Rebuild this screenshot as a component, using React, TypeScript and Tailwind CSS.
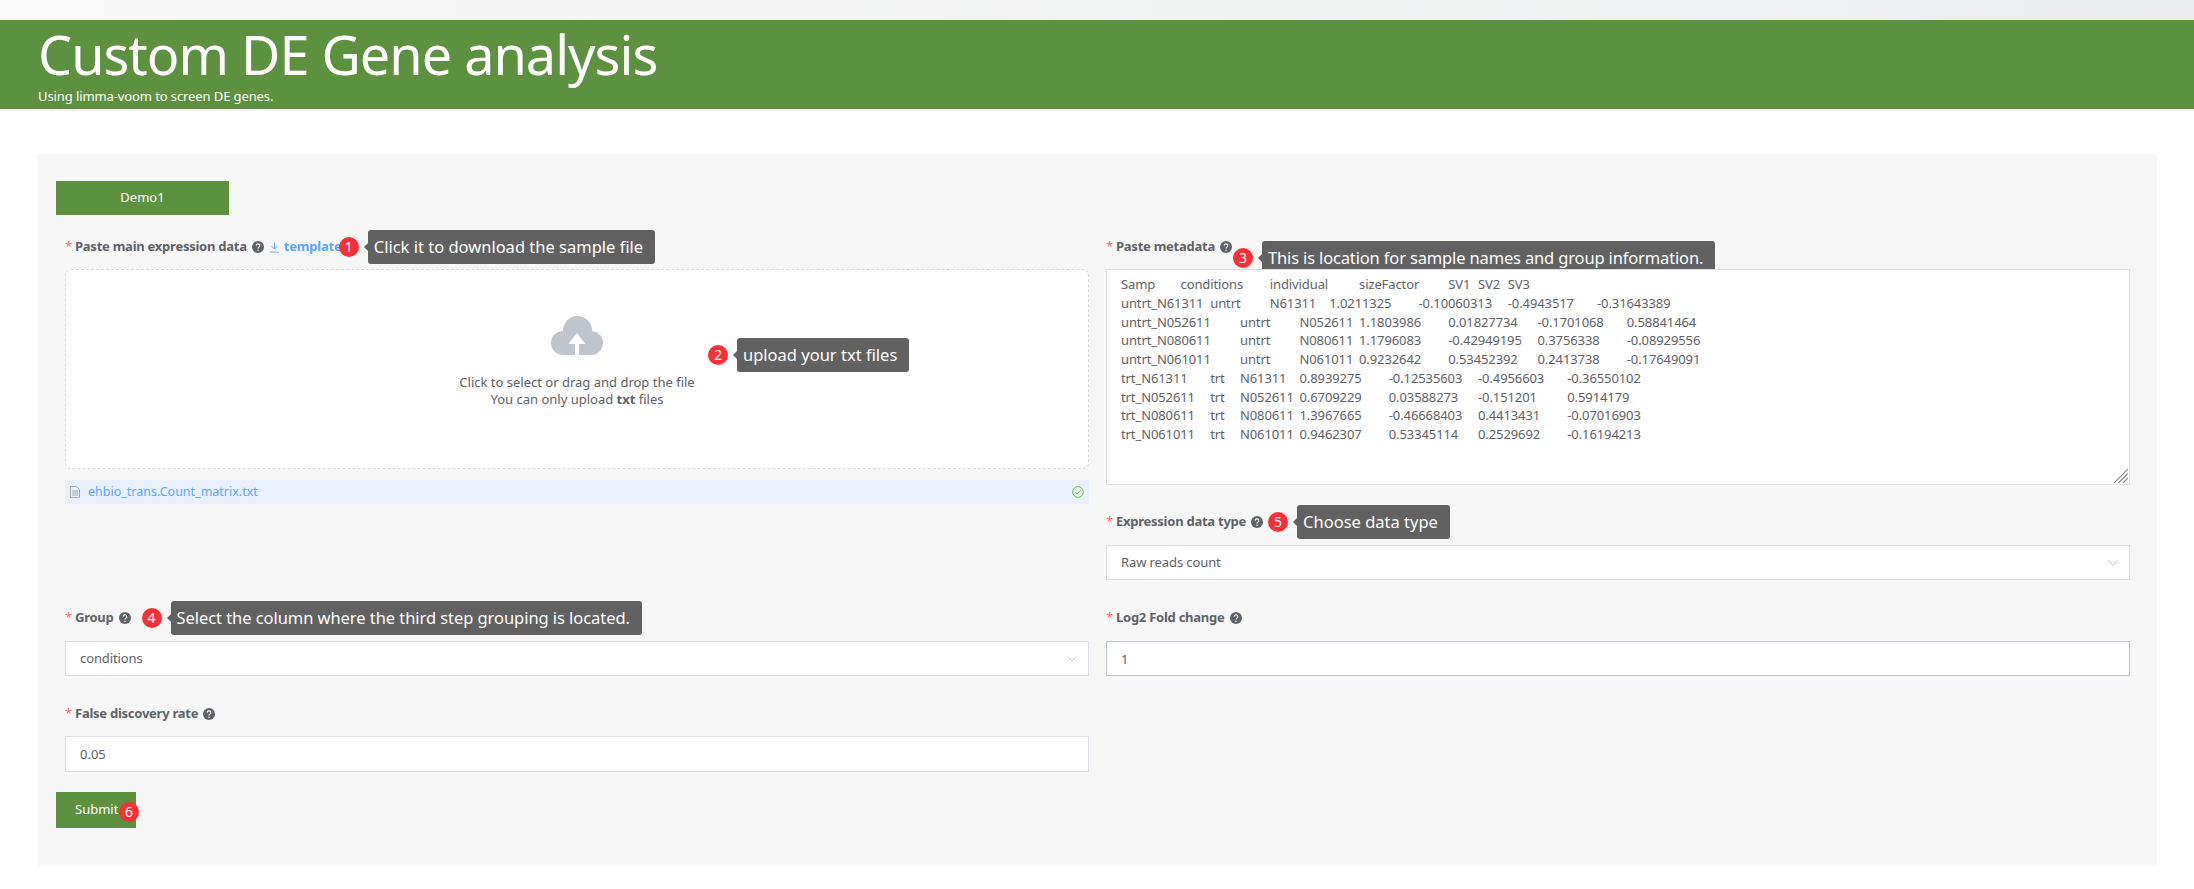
import React from "react";

const GREEN = "bg-[#5b913f]";
const meta = [
  "Samp\tconditions\tindividual\tsizeFactor\tSV1\tSV2\tSV3",
  "untrt_N61311\tuntrt\tN61311\t1.0211325\t-0.10060313\t-0.4943517\t-0.31643389",
  "untrt_N052611\tuntrt\tN052611\t1.1803986\t0.01827734\t-0.1701068\t0.58841464",
  "untrt_N080611\tuntrt\tN080611\t1.1796083\t-0.42949195\t0.3756338\t-0.08929556",
  "untrt_N061011\tuntrt\tN061011\t0.9232642\t0.53452392\t0.2413738\t-0.17649091",
  "trt_N61311\ttrt\tN61311\t0.8939275\t-0.12535603\t-0.4956603\t-0.36550102",
  "trt_N052611\ttrt\tN052611\t0.6709229\t0.03588273\t-0.151201\t0.5914179",
  "trt_N080611\ttrt\tN080611\t1.3967665\t-0.46668403\t0.4413431\t-0.07016903",
  "trt_N061011\ttrt\tN061011\t0.9462307\t0.53345114\t0.2529692\t-0.16194213",
].join("\n");

function Help() {
  return (
    <svg viewBox="0 0 12 12" className="w-3 h-3 shrink-0">
      <circle cx="6" cy="6" r="6" fill="#5f6266" />
      <path d="M4.2 4.7a1.8 1.8 0 1 1 2.7 1.5c-.6.4-.9.6-.9 1.3" fill="none" stroke="#fff" strokeWidth="1.1" />
      <circle cx="6" cy="9.2" r=".75" fill="#fff" />
    </svg>
  );
}

function Badge({ n, className = "" }: { n: number; className?: string }) {
  return (
    <span className={`w-5 h-5 rounded-full bg-[#fb2f36] text-white text-[14px] leading-5 text-center shrink-0 ${className}`}>{n}</span>
  );
}

function Tip({ text, className = "" }: { text: string; className?: string }) {
  return (
    <span className={`relative h-[34px] leading-[34px] pl-[6px] pr-[12px] rounded-[3px] bg-[#616161] text-white text-[16.5px] whitespace-nowrap shrink-0 ${className}`}>
      <span className="absolute left-[-4px] top-[13px] w-0 h-0 border-y-[4px] border-y-transparent border-r-[4px] border-r-[#616161]" />
      {text}
    </span>
  );
}

function Label({ text, children, className = "" }: { text: string; children?: React.ReactNode; className?: string }) {
  return (
    <div className={`flex items-center h-[34px] text-[13px] ${className}`}>
      <span className="text-[#f56c6c] w-[10px] shrink-0">*</span>
      <span className="font-bold text-[#5f6266] whitespace-nowrap mr-[5px] tracking-[-0.25px]">{text}</span>
      <Help />
      {children}
    </div>
  );
}

function Chevron() {
  return (
    <svg viewBox="0 0 10 6" className="w-[10px] h-[6px] shrink-0">
      <path d="M.5.5 5 5.300 9.500.5" fill="none" stroke="#c0c4cc" strokeWidth="1" />
    </svg>
  );
}

function SelectBox({ value }: { value: string }) {
  return (
    <div className="flex items-center justify-between h-[35px] pl-[14px] pr-[11px] bg-white border border-[#dcdfe6] text-[13px] tracking-[-0.1px] text-[#606266]">
      <span>{value}</span>
      <Chevron />
    </div>
  );
}

export default function App() {
  return (
    <div className="min-h-[889px] bg-white font-['Noto_Sans','Noto_Sans_CJK_SC',sans-serif] text-[#606266]">
      <div className="h-5 bg-gradient-to-r from-[#f8f8f8] to-[#ecedee]" />
      <header className={`${GREEN} h-[89px] pl-[38px] text-white`}>
        <h1 className="text-[54px] tracking-[-1px] leading-[64px] pt-[2px] whitespace-nowrap">Custom DE Gene analysis</h1>
        <p className="text-[13px] tracking-[-0.1px] leading-[20px]">Using limma-voom to screen DE genes.</p>
      </header>

      <main className="mt-[45px] ml-[38px] mr-[37px] bg-[#f7f7f7] pt-[27px] pb-[38px] pl-[18px] pr-[27px]">
        <button className={`${GREEN} w-[173px] h-[34px] text-white text-[13px] block`}>Demo1</button>

        <div className="pl-[9px] mt-[15px] grid grid-cols-2 gap-x-[17px]">
          <div>
            <Label text="Paste main expression data" className="mb-[5px]">
              <svg viewBox="0 0 12 12" className="w-[11px] h-[11px] ml-[5px] shrink-0">
                <path d="M6 .5v7M2.800 4.600 6 7.800l3.200-3.200M1 11h10" fill="none" stroke="#53a8ff" strokeWidth="1" />
              </svg>
              <span className="ml-[4px] w-[55px] font-bold text-[#53a8ff] tracking-[-0.2px]">template</span>
              <Badge n={1} className="relative" />
              <Tip text="Click it to download the sample file" className="ml-[9px]" />
            </Label>
            <div className="relative h-[200px] bg-white rounded-[6px] border border-dashed border-[#d9d9d9] flex flex-col items-center pt-[46px]">
              <svg viewBox="0 0 52 39" className="w-[52px] h-[39px]">
                <circle cx="26.500" cy="14.500" r="14.500" fill="#c0c4cc" />
                <circle cx="12" cy="27" r="12" fill="#c0c4cc" />
                <circle cx="40" cy="27" r="12" fill="#c0c4cc" />
                <rect x="12" y="20" width="28" height="19" fill="#c0c4cc" />
                <path d="M26 17 34.500 28H28V39H24V28H17.500Z" fill="#fff" />
              </svg>
              <p className="mt-[19px] text-[13px] leading-[17px] text-center text-[#606266]">
                Click to select or drag and drop the file
                <br />
                You can only upload <b>txt</b> files
              </p>
              <div className="absolute left-[642px] top-[68px] flex items-center gap-[9px]">
                <Badge n={2} />
                <Tip text="upload your txt files" />
              </div>
            </div>
            <div className="mt-[11px] h-[24px] bg-[#e9f0fb] flex items-center pl-[5px] pr-[5px] text-[12.500px] text-[#5aa9f8]">
              <svg viewBox="0 0 10 12" className="w-[10px] h-[12px] shrink-0 mr-[8px]">
                <path d="M.5.5h6l3 3v8h-9ZM2 5h6M2 7h6M2 9h6" fill="none" stroke="#a6a9ad" strokeWidth="1" />
              </svg>
              <span className="flex-1">ehbio_trans.Count_matrix.txt</span>
              <svg viewBox="0 0 12 12" className="w-3 h-3 shrink-0">
                <circle cx="6" cy="6" r="5.400" fill="none" stroke="#67c23a" strokeWidth="1" />
                <path d="M3.300 6.200 5.200 8 8.800 4.300" fill="none" stroke="#67c23a" strokeWidth="1" />
              </svg>
            </div>
          </div>

          <div>
            <Label text="Paste metadata" className="mb-[5px]">
              <Badge n={3} className="ml-[1px] relative top-[11px]" />
              <Tip text="This is location for sample names and group information." className="ml-[9px] top-[11px] tracking-[-0.15px]" />
            </Label>
            <div className="relative">
              <textarea
                readOnly
                defaultValue={meta}
                rows={11}
                wrap="off"
                className="block w-full h-[216px] bg-white border border-[#dcdfe6] pt-[5px] pl-[14px] pr-[15px] text-[13px] tracking-[-0.1px] leading-[18.75px] text-[#606266] [tab-size:29.75px] resize-none outline-none overflow-hidden"
              />
              <svg viewBox="0 0 14 14" className="absolute right-[2px] bottom-[2px] w-[14px] h-[14px]">
                <path d="M0 14 14 0M4.500 14 14 4.500M9 14 14 9" fill="none" stroke="#8a8a8a" strokeWidth="1.200" />
              </svg>
            </div>
            <Label text="Expression data type" className="mt-[20px] mb-[6px]">
              <Badge n={5} className="ml-[5px]" />
              <Tip text="Choose data type" className="ml-[9px]" />
            </Label>
            <SelectBox value="Raw reads count" />
          </div>

          <div className="mt-[21px]">
            <Label text="Group" className="mb-[6px]">
              <Badge n={4} className="ml-[11px]" />
              <Tip text="Select the column where the third step grouping is located." className="ml-[9px] tracking-[-0.06px]" />
            </Label>
            <SelectBox value="conditions" />
          </div>

          <div className="mt-[21px]">
            <Label text="Log2 Fold change" className="mb-[6px]" />
            <input
              readOnly
              defaultValue="1"
              className="block w-full h-[35px] pl-[14px] pr-[15px] bg-white border border-[#c0c4cc] text-[13px] text-[#606266] outline-none"
            />
          </div>

          <div className="mt-[21px]">
            <Label text="False discovery rate" className="mb-[5px]" />
            <input
              readOnly
              defaultValue="0.05"
              className="block w-full h-[36px] pl-[14px] pr-[15px] bg-white border border-[#dcdfe6] text-[13px] text-[#606266] outline-none"
            />
          </div>
        </div>

        <button className={`${GREEN} relative block mt-[20px] w-[80px] h-[36px] text-white text-[13px] text-left pl-[19px]`}>
          Submit
          <Badge n={6} className="absolute left-[63px] top-[10px]" />
        </button>
      </main>
    </div>
  );
}
